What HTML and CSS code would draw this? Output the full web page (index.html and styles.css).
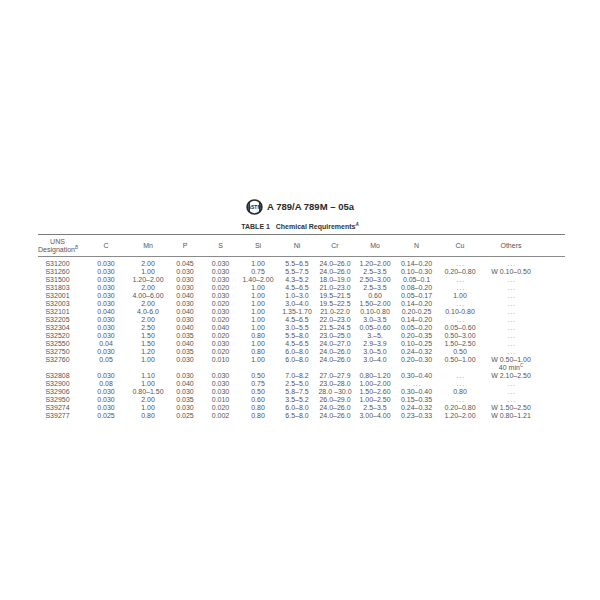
FILE: index.html
```html
<!DOCTYPE html>
<html>
<head>
<meta charset="utf-8">
<link rel="stylesheet" href="styles.css">
</head>
<body>
<div class="page">
  <div class="doc-header">
    <svg class="logo" width="17" height="16" viewBox="0 0 17 16">
      <ellipse cx="8.5" cy="8" rx="7.4" ry="7" fill="none" stroke="#2a2a2a" stroke-width="1.7"/>
      <path d="M3.2 3 L3.2 13 M13.8 3 L13.8 13" stroke="#2a2a2a" stroke-width="1.5"/>
      <text x="8.5" y="10.2" text-anchor="middle" class="logo-text">ASTM</text>
    </svg>
    <span class="doc-title">A 789/A 789M – 05a</span>
  </div>
  <div class="table-title">TABLE 1&nbsp;&nbsp;&nbsp;Chemical Requirements<sup>A</sup></div>
  <table class="chem">
    <colgroup>
      <col class="w45"><col class="w46"><col class="w38"><col class="w36"><col class="w35"><col class="w40">
      <col class="w38"><col class="w38"><col class="w42"><col class="w41"><col class="w46"><col class="w82">
    </colgroup>
    <thead>
      <tr>
        <th class="first">UNS<br>Designation<sup>B</sup></th>
        <th>C</th><th>Mn</th><th>P</th><th>S</th><th>Si</th><th>Ni</th><th>Cr</th><th>Mo</th><th>N</th><th>Cu</th><th class="last">Others</th>
      </tr>
    </thead>
    <tbody>
      <tr class="top"><td class="first">S31200</td><td>0.030</td><td>2.00</td><td>0.045</td><td>0.030</td><td>1.00</td><td>5.5–6.5</td><td>24.0–26.0</td><td>1.20–2.00</td><td>0.14–0.20</td><td class="na">. . .</td><td class="last na">. . .</td></tr>
      <tr><td class="first">S31260</td><td>0.030</td><td>1.00</td><td>0.030</td><td>0.030</td><td>0.75</td><td>5.5–7.5</td><td>24.0–26.0</td><td>2.5–3.5</td><td>0.10–0.30</td><td>0.20–0.80</td><td class="last">W 0.10–0.50</td></tr>
      <tr><td class="first">S31500</td><td>0.030</td><td>1.20–2.00</td><td>0.030</td><td>0.030</td><td>1.40–2.00</td><td>4.3–5.2</td><td>18.0–19.0</td><td>2.50–3.00</td><td>0.05–0.1</td><td class="na">. . .</td><td class="last na">. . .</td></tr>
      <tr><td class="first">S31803</td><td>0.030</td><td>2.00</td><td>0.030</td><td>0.020</td><td>1.00</td><td>4.5–6.5</td><td>21.0–23.0</td><td>2.5–3.5</td><td>0.08–0.20</td><td class="na">. . .</td><td class="last na">. . .</td></tr>
      <tr><td class="first">S32001</td><td>0.030</td><td>4.00–6.00</td><td>0.040</td><td>0.030</td><td>1.00</td><td>1.0–3.0</td><td>19.5–21.5</td><td>0.60</td><td>0.05–0.17</td><td>1.00</td><td class="last na">. . .</td></tr>
      <tr><td class="first">S32003</td><td>0.030</td><td>2.00</td><td>0.030</td><td>0.020</td><td>1.00</td><td>3.0–4.0</td><td>19.5–22.5</td><td>1.50–2.00</td><td>0.14–0.20</td><td class="na">. . .</td><td class="last na">. . .</td></tr>
      <tr><td class="first">S32101</td><td>0.040</td><td>4.0-6.0</td><td>0.040</td><td>0.030</td><td>1.00</td><td>1.35-1.70</td><td>21.0-22.0</td><td>0.10-0.80</td><td>0.20-0.25</td><td>0.10-0.80</td><td class="last na">. . .</td></tr>
      <tr><td class="first">S32205</td><td>0.030</td><td>2.00</td><td>0.030</td><td>0.020</td><td>1.00</td><td>4.5–6.5</td><td>22.0–23.0</td><td>3.0–3.5</td><td>0.14–0.20</td><td class="na">. . .</td><td class="last na">. . .</td></tr>
      <tr><td class="first">S32304</td><td>0.030</td><td>2.50</td><td>0.040</td><td>0.040</td><td>1.00</td><td>3.0–5.5</td><td>21.5–24.5</td><td>0.05–0.60</td><td>0.05–0.20</td><td>0.05–0.60</td><td class="last na">. . .</td></tr>
      <tr><td class="first">S32520</td><td>0.030</td><td>1.50</td><td>0.035</td><td>0.020</td><td>0.80</td><td>5.5–8.0</td><td>23.0–25.0</td><td>3.–5.</td><td>0.20–0.35</td><td>0.50–3.00</td><td class="last na">. . .</td></tr>
      <tr><td class="first">S32550</td><td>0.04</td><td>1.50</td><td>0.040</td><td>0.030</td><td>1.00</td><td>4.5–6.5</td><td>24.0–27.0</td><td>2.9–3.9</td><td>0.10–0.25</td><td>1.50–2.50</td><td class="last na">. . .</td></tr>
      <tr><td class="first">S32750</td><td>0.030</td><td>1.20</td><td>0.035</td><td>0.020</td><td>0.80</td><td>6.0–8.0</td><td>24.0–26.0</td><td>3.0–5.0</td><td>0.24–0.32</td><td>0.50</td><td class="last na">. . .</td></tr>
      <tr><td class="first">S32760</td><td>0.05</td><td>1.00</td><td>0.030</td><td>0.010</td><td>1.00</td><td>6.0–8.0</td><td>24.0–26.0</td><td>3.0–4.0</td><td>0.20–0.30</td><td>0.50–1.00</td><td class="last">W 0.50–1.00<br>40 min<sup>C</sup></td></tr>
      <tr><td class="first">S32808</td><td>0.030</td><td>1.10</td><td>0.030</td><td>0.030</td><td>0.50</td><td>7.0–8.2</td><td>27.0–27.9</td><td>0.80–1.20</td><td>0.30–0.40</td><td class="na">. . .</td><td class="last">W 2.10–2.50</td></tr>
      <tr><td class="first">S32900</td><td>0.08</td><td>1.00</td><td>0.040</td><td>0.030</td><td>0.75</td><td>2.5–5.0</td><td>23.0–28.0</td><td>1.00–2.00</td><td class="na">. . .</td><td class="na">. . .</td><td class="last na">. . .</td></tr>
      <tr><td class="first">S32906</td><td>0.030</td><td>0.80–1.50</td><td>0.030</td><td>0.030</td><td>0.50</td><td>5.8–7.5</td><td>28.0 –30.0</td><td>1.50–2.60</td><td>0.30–0.40</td><td>0.80</td><td class="last na">. . .</td></tr>
      <tr><td class="first">S32950</td><td>0.030</td><td>2.00</td><td>0.035</td><td>0.010</td><td>0.60</td><td>3.5–5.2</td><td>26.0–29.0</td><td>1.00–2.50</td><td>0.15–0.35</td><td class="na">. . .</td><td class="last na">. . .</td></tr>
      <tr><td class="first">S39274</td><td>0.030</td><td>1.00</td><td>0.030</td><td>0.020</td><td>0.80</td><td>6.0–8.0</td><td>24.0–26.0</td><td>2.5–3.5</td><td>0.24–0.32</td><td>0.20–0.80</td><td class="last">W 1.50–2.50</td></tr>
      <tr><td class="first">S39277</td><td>0.025</td><td>0.80</td><td>0.025</td><td>0.002</td><td>0.80</td><td>6.5–8.0</td><td>24.0–26.0</td><td>3.00–4.00</td><td>0.23–0.33</td><td>1.20–2.00</td><td class="last">W 0.80–1.21</td></tr>
    </tbody>
  </table>
</div>
</body>
</html>
```

FILE: styles.css
```css
html, body {
  margin: 0;
  padding: 0;
  background: #ffffff;
}

body {
  font-family: "Liberation Sans", Arial, sans-serif;
  color: #555555;
}

.page {
  width: 600px;
  height: 600px;
  box-sizing: border-box;
  padding-top: 198px;
}

.doc-header {
  display: flex;
  justify-content: center;
  align-items: center;
  gap: 4px;
  height: 18px;
}

.logo {
  display: block;
}

.logo-text {
  font-family: "Liberation Sans", Arial, sans-serif;
  font-weight: bold;
  font-size: 5px;
  fill: #2a2a2a;
}

.doc-title {
  font-size: 9.5px;
  font-weight: bold;
  color: #2a2a2a;
  line-height: 12px;
}

.table-title {
  text-align: center;
  font-size: 7px;
  font-weight: bold;
  color: #333333;
  line-height: 10px;
  height: 10px;
  margin-top: 6px;
  white-space: pre;
}

.table-title sup,
.chem sup {
  font-size: 4.5px;
  line-height: 0;
  vertical-align: 3px;
  font-style: italic;
}

.chem {
  margin-top: 2px;
  margin-left: 38px;
  width: 527px;
  table-layout: fixed;
  border-collapse: collapse;
  font-size: 7px;
  line-height: 8px;
  border-top: 1.5px solid #7a7a7a;
}

.w35 { width: 35px; }
.w36 { width: 36px; }
.w38 { width: 38px; }
.w40 { width: 40px; }
.w41 { width: 41px; }
.w42 { width: 42px; }
.w45 { width: 45px; }
.w46 { width: 46px; }
.w82 { width: 82px; }

.chem th {
  font-weight: normal;
  height: 21px;
  padding: 0;
  text-align: center;
  vertical-align: middle;
  border-bottom: 1px solid #8a8a8a;
  white-space: nowrap;
}

.chem td {
  padding: 0;
  text-align: center;
  vertical-align: top;
  white-space: nowrap;
}

.chem tr.top td {
  padding-top: 3px;
}

.chem .first {
  padding-right: 6px;
}

.chem .last {
  padding-right: 26px;
}

.chem .na {
  color: #8a8a8a;
  letter-spacing: -0.5px;
}
```
